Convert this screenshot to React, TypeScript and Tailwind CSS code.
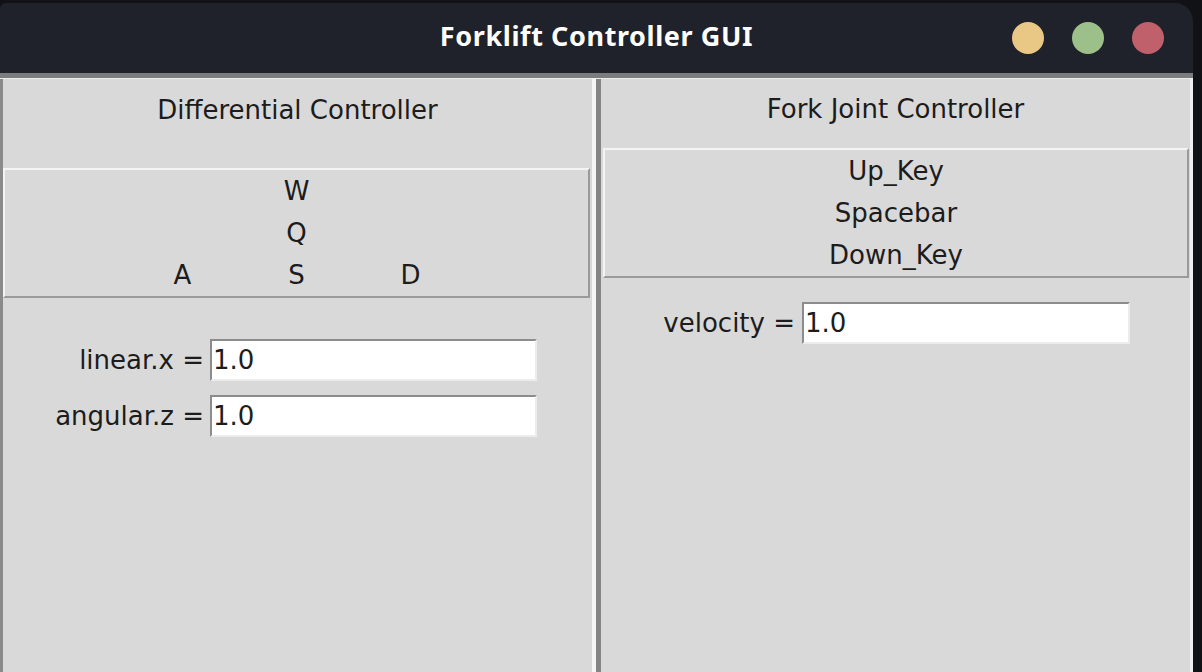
const font = { fontFamily: '"DejaVu Sans", Verdana, sans-serif' };

const Entry = ({ value, width }: { value: string; width: number }) => (
  <div
    className="h-[42px] bg-white border-t-2 border-l-2 border-b-2 border-r-2 border-t-[#8c8c8c] border-l-[#8c8c8c] border-b-[#ececec] border-r-[#ececec] flex items-center pl-[1px] text-[26px] text-[#1c1c1c] leading-none"
    style={{ width }}
  >
    {value}
  </div>
);

const KeyRow = ({ children }: { children: React.ReactNode }) => (
  <div className="h-[42px] flex items-center justify-center text-[26px] leading-none">{children}</div>
);

export default function App() {
  return (
    <div className="w-[1202px] h-[672px] bg-[#111216] overflow-hidden pt-[3px]" style={font}>
      <div className="w-[1193px] h-[669px] flex flex-col rounded-tl-[6px] rounded-tr-[18px] bg-[#1f222a] overflow-hidden">
        {/* title bar */}
        <div className="h-[70px] relative flex items-center justify-center shrink-0">
          <span
            className="text-white text-[27px] font-bold tracking-[0.6px] -mt-[3px]"
            style={{ fontFamily: '"Noto Sans", "Open Sans", sans-serif' }}
          >
            Forklift Controller GUI
          </span>
          <div className="absolute right-[29px] top-[19px] flex gap-[28px]">
            <span className="w-[32px] h-[32px] rounded-full bg-[#e9c885]" />
            <span className="w-[32px] h-[32px] rounded-full bg-[#9dbf89]" />
            <span className="w-[32px] h-[32px] rounded-full bg-[#c0606a]" />
          </div>
        </div>
        <div className="h-[5px] bg-[#7c7c7c] shrink-0" />

        {/* body */}
        <div className="flex flex-1 bg-[#d9d9d9] text-[#1c1c1c] border-t border-t-[#ededed]">
          {/* left frame */}
          <div className="w-[596px] border-l-[3px] border-l-[#8a8a8a] border-r-[4px] border-r-[#f6f6f6] flex flex-col">
            <div className="h-[62px] flex items-center justify-center text-[26px] leading-none">
              Differential Controller
            </div>
            <div className="mt-[27px] mr-[2px] border-t-2 border-l-2 border-b-2 border-r-2 border-t-[#f4f4f4] border-l-[#f4f4f4] border-b-[#9a9a9a] border-r-[#9a9a9a] flex flex-col">
              <KeyRow>W</KeyRow>
              <KeyRow>Q</KeyRow>
              <div className="h-[42px] grid grid-cols-[114px_114px_114px] justify-center items-center text-[26px] leading-none">
                <span className="text-center">A</span>
                <span className="text-center">S</span>
                <span className="text-center">D</span>
              </div>
            </div>
            <div className="mt-[41px] flex flex-col gap-[14px]">
              <div className="flex items-center">
                <span className="w-[201px] text-right text-[26px] leading-none">linear.x =</span>
                <div className="ml-[6px]">
                  <Entry value="1.0" width={327} />
                </div>
              </div>
              <div className="flex items-center">
                <span className="w-[201px] text-right text-[26px] leading-none">angular.z =</span>
                <div className="ml-[6px]">
                  <Entry value="1.0" width={327} />
                </div>
              </div>
            </div>
          </div>

          {/* right frame */}
          <div className="flex-1 border-l-[5px] border-l-[#858585] border-r-[3px] border-r-[#efefef] flex flex-col">
            <div className="h-[59px] flex items-center justify-center text-[26px] leading-none">
              Fork Joint Controller
            </div>
            <div className="mt-[10px] ml-[2px] mr-[1px] border-t-2 border-l-2 border-b-2 border-r-2 border-t-[#f4f4f4] border-l-[#f4f4f4] border-b-[#9a9a9a] border-r-[#9a9a9a] flex flex-col">
              <KeyRow>Up_Key</KeyRow>
              <KeyRow>Spacebar</KeyRow>
              <KeyRow>Down_Key</KeyRow>
            </div>
            <div className="mt-[24px] flex items-center">
              <span className="w-[194px] text-right text-[26px] leading-none">velocity =</span>
              <div className="ml-[7px]">
                <Entry value="1.0" width={328} />
              </div>
            </div>
          </div>
        </div>
      </div>
    </div>
  );
}
